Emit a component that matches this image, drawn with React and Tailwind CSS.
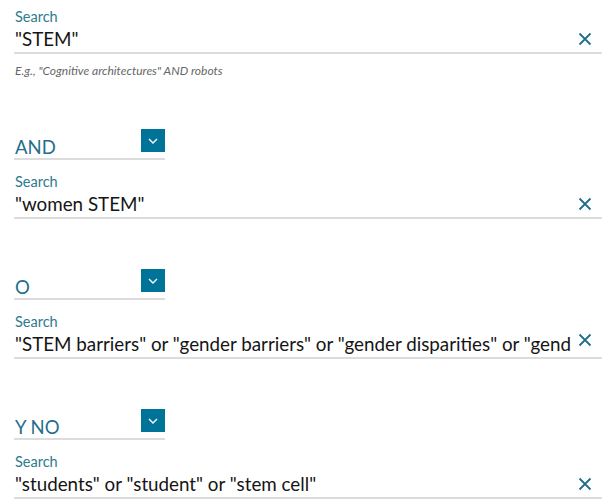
import React from 'react';

const fields = [
  { op: null, value: '"STEM"', hint: true },
  { op: 'AND', value: '"women STEM"' },
  { op: 'O', value: '"STEM barriers" or "gender barriers" or "gender disparities" or "gend' },
  { op: 'Y NO', value: '"students" or "student" or "stem cell"' },
];

const ClearIcon = () => (
  <svg width="14" height="14" viewBox="0 0 14 14" className="shrink-0">
    <path d="M1.5 1.5 L12.5 12.5 M12.5 1.5 L1.5 12.5" stroke="#1f6e8c" strokeWidth="1.8" fill="none" />
  </svg>
);

const OperatorSelect = ({ label }) => (
  <div className="flex w-[151px] h-[31px] items-end justify-between border-b-2 border-[#dcdcdc]">
    <span className="text-[18.5px] leading-[22px] text-[#1f6e8c] pl-px">{label}</span>
    <span className="mb-[6px] flex h-[23px] w-[24px] items-center justify-center bg-[#007398]">
      <svg width="10" height="6" viewBox="0 0 10 6">
        <path d="M1 1 L5 5 L9 1" stroke="#fff" strokeWidth="1.4" fill="none" />
      </svg>
    </span>
  </div>
);

const SearchField = ({ value, clearOffset }) => (
  <div className="flex flex-col">
    <label className="text-[14.5px] leading-[18px] text-[#2e7a8e] pl-px">Search</label>
    <div className="flex h-[28px] w-[588px] items-center border-b-2 border-[#dcdcdc] pr-[10px]">
      <div className="flex-1 whitespace-nowrap text-[18.8px] leading-[24px] text-[#151515] pl-px">
        {value}
      </div>
      <div className={clearOffset ? 'ml-1 -mt-[8px]' : 'ml-2'}>
        <ClearIcon />
      </div>
    </div>
  </div>
);

export default function App() {
  return (
    <div className="min-h-[499px] w-[612px] overflow-hidden bg-white pl-[14px] pt-[8px] font-['Lato','Liberation_Sans',sans-serif]">
      {fields.map((f, i) => (
        <div key={i} className={i === 0 ? '' : i === 1 ? 'mt-[51px]' : 'mt-[50px]'}>
          {f.op && (
            <div className="mb-[13px]">
              <OperatorSelect label={f.op} />
            </div>
          )}
          <SearchField value={f.value} clearOffset={i === 2} />
          {f.hint && (
            <p className="mt-[10px] text-[12px] italic leading-[14px] text-[#666] pl-px">
              E.g., "Cognitive architectures" AND robots
            </p>
          )}
        </div>
      ))}
    </div>
  );
}
